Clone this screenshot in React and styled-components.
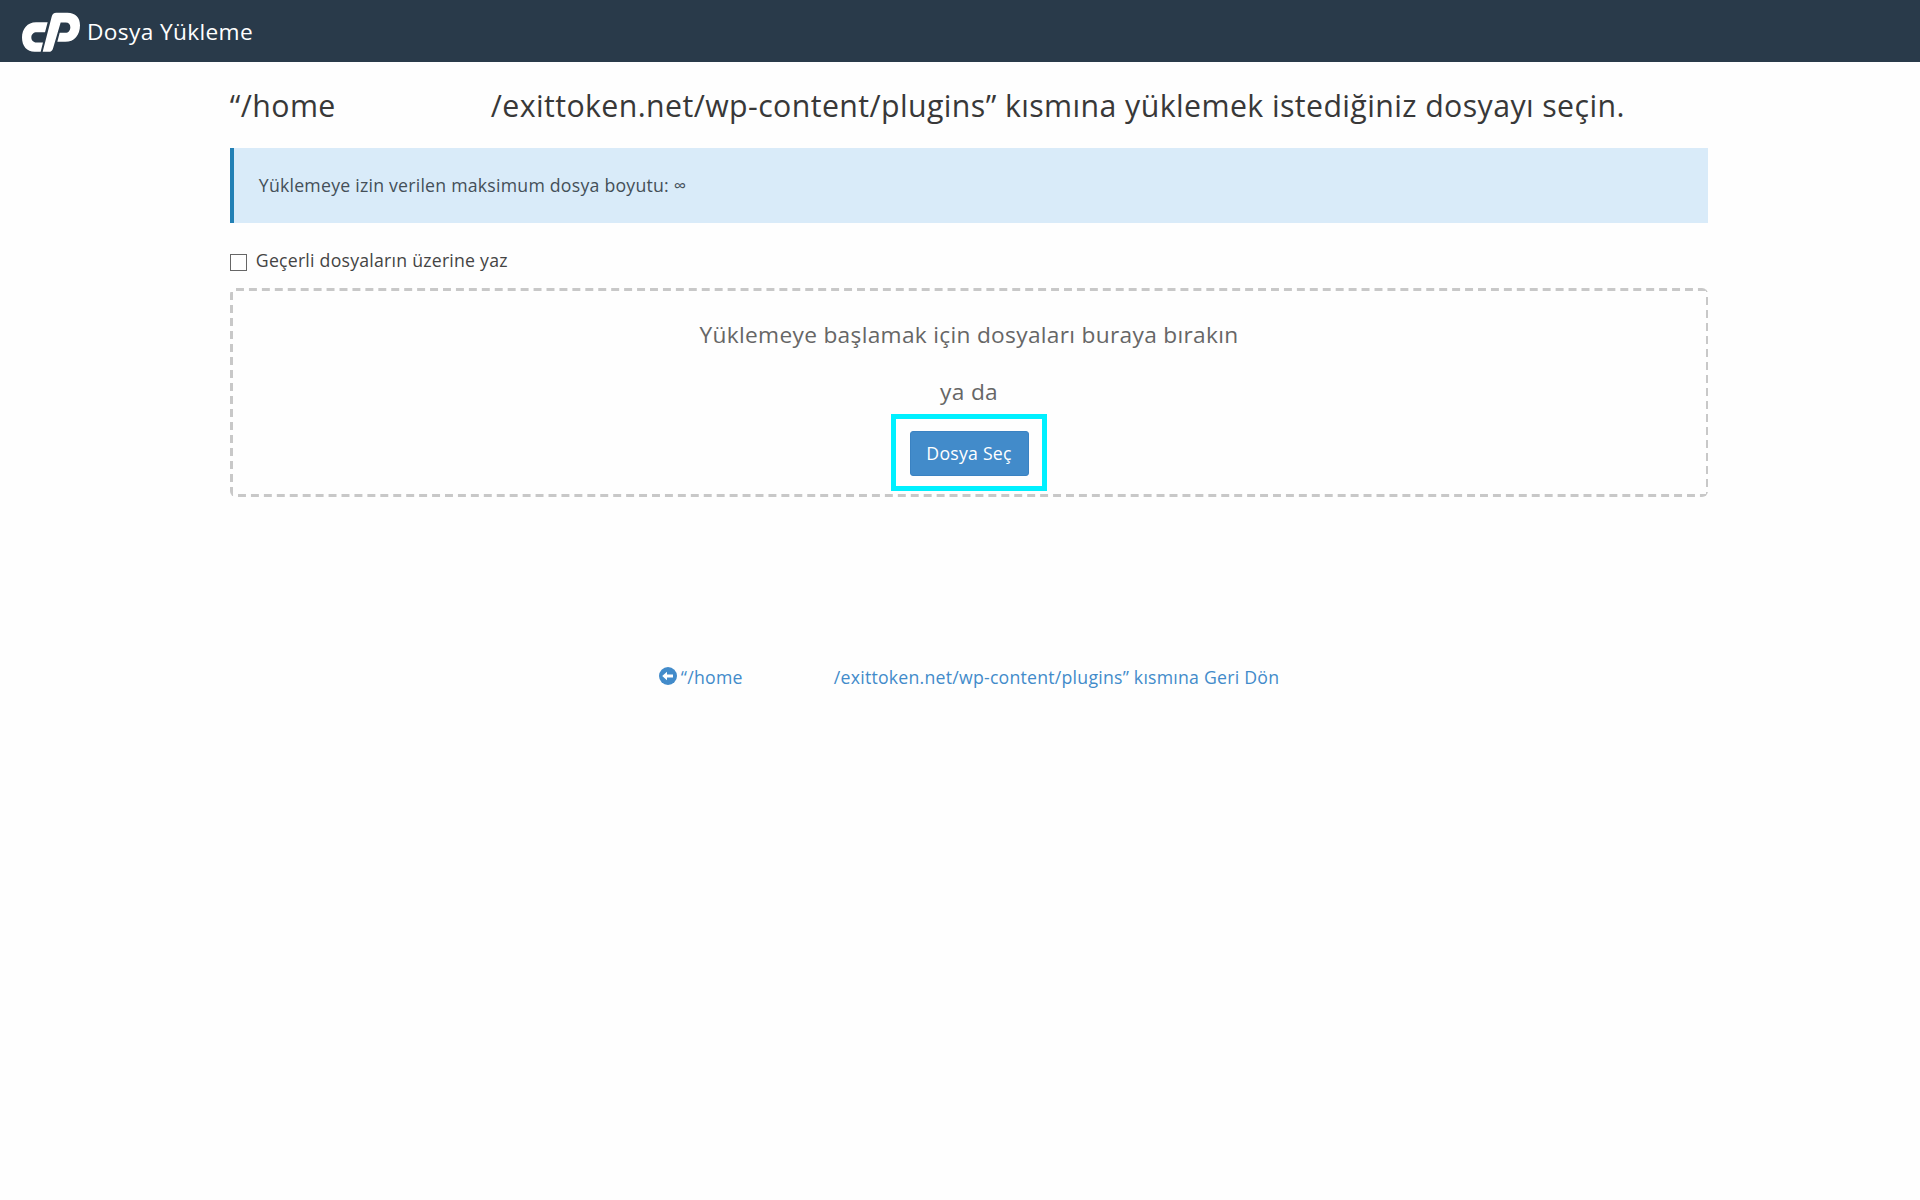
import React from "react";
import styled, { createGlobalStyle } from "styled-components";

const GlobalStyle = createGlobalStyle`
  body {
    margin: 0;
    background: #fefefe;
    color: #444;
    font-family: "Open Sans", "Noto Sans", sans-serif;
    font-size: 17.7px;
    line-height: 25px;
    letter-spacing: 0.23px;
  }
`;

const Header = styled.header`
  display: flex;
  align-items: center;
  height: 62px;
  padding: 0 22px;
  box-sizing: border-box;
  background: #293a4a;
  color: #fff;
`;

const Logo = styled.svg`
  width: 58px;
  height: 40px;
  margin-top: 2px;
  fill: #fff;
`;

const AppName = styled.span`
  margin: 2px 0 0 7px;
  font-size: 22.7px;
  line-height: 30px;
  letter-spacing: 0.35px;
  white-space: nowrap;
`;

const Page = styled.main`
  width: 1478.5px;
  margin-left: 229.8px;
`;

const Title = styled.h1`
  display: flex;
  margin: 0;
  padding: 23px 0 21px;
  color: #383838;
  font-size: 30.3px;
  font-weight: 400;
  line-height: 42px;
  letter-spacing: 0.4px;
  white-space: nowrap;
`;

const PathStart = styled.span`
  flex: none;
  width: ${props => props.$width}px;
`;

const Notice = styled.div`
  display: flex;
  align-items: center;
  height: 75px;
  padding-left: 25px;
  box-sizing: border-box;
  border-left: 4px solid #2280b5;
  background: #d9ebf9;
  color: #444f58;
`;

const Overwrite = styled.label`
  display: flex;
  align-items: center;
  width: max-content;
  margin-top: 25px;
`;

const Checkbox = styled.input`
  appearance: none;
  width: 17px;
  height: 17px;
  margin: 3px 9px 0 0;
  border: 1px solid #666;
  background: #fff;
`;

/* the dashes are longer than those of a dashed border */
const DropZone = styled.section`
  display: flex;
  flex-direction: column;
  align-items: center;
  height: 208.5px;
  margin-top: 15px;
  padding-top: 31px;
  box-sizing: border-box;
  border-radius: 6px;
  background-image: linear-gradient(90deg, #c8c8c8 8px, transparent 8px),
    linear-gradient(90deg, #c8c8c8 8px, transparent 8px),
    linear-gradient(#c8c8c8 8px, transparent 8px),
    linear-gradient(#c8c8c8 8px, transparent 8px);
  background-size: 12.94px 2.5px, 12.94px 2.5px, 2.5px 13px, 2.5px 13px;
  background-position: 6px 0, 8px 100%, 0 4px, 100% 9px;
  background-repeat: repeat-x, repeat-x, repeat-y, repeat-y;
  color: #666;
`;

const DropText = styled.p`
  margin: 0 0 ${props => props.$gap}px;
  font-size: 22.7px;
  line-height: 32px;
  letter-spacing: 0.31px;
`;

const Highlight = styled.div`
  display: flex;
  align-items: center;
  justify-content: center;
  width: 156px;
  height: 77px;
  padding-top: 2px;
  box-sizing: border-box;
  border: 5px solid #00f0ff;
`;

const SelectButton = styled.button`
  width: 119px;
  height: 45px;
  padding: 0;
  border: 1px solid #3a82c2;
  border-radius: 3px;
  background: #428bca;
  color: #fff;
  font: inherit;
  letter-spacing: inherit;
`;

const BackLink = styled.a`
  display: flex;
  align-items: center;
  width: max-content;
  margin: 168.5px auto 0;
  color: #428bca;
  white-space: nowrap;
`;

const BackIcon = styled.svg`
  width: 18px;
  height: 18px;
  margin: -4px 4px 0 0;
`;

const App = () => {
  return (
    <>
      <GlobalStyle />
      <Header>
        <Logo viewBox="0 0 174 119">
          <path d="M77 30H42C16 30 0 50 0 76C0 102 15 119 38 119H56L63 91H43C34 91 28 84 28 76C28 66 35 60 44 60H69Z" />
          <path d="M103 2H136C161 2 174 17 174 39C174 68 157 89 130 89H106L113 62H130C140 62 145 54 145 45C145 36 140 31 131 31H116L93 109C91 116 87 119 80 119H62L89 14C91 6 95 2 103 2Z" />
        </Logo>
        <AppName>Dosya Yükleme</AppName>
      </Header>
      <Page>
        <Title>
          <PathStart $width={261}>“/home</PathStart>
          <span>
            /exittoken.net/wp-content/plugins” kısmına yüklemek istediğiniz
            dosyayı seçin.
          </span>
        </Title>
        <Notice>Yüklemeye izin verilen maksimum dosya boyutu: ∞</Notice>
        <Overwrite>
          <Checkbox type="checkbox" />
          Geçerli dosyaların üzerine yaz
        </Overwrite>
        <DropZone>
          <DropText $gap={25}>
            Yüklemeye başlamak için dosyaları buraya bırakın
          </DropText>
          <DropText $gap={5.5}>ya da</DropText>
          <Highlight>
            <SelectButton type="button">Dosya Seç</SelectButton>
          </Highlight>
        </DropZone>
        <BackLink>
          <BackIcon viewBox="0 0 18 18">
            <circle cx="9" cy="9" r="9" fill="#428bca" />
            <path
              d="M3.2 9L8 4.7V7.6H14V10.4H8V13.3Z"
              fill="#fff"
            />
          </BackIcon>
          <PathStart $width={153}>“/home</PathStart>
          <span>/exittoken.net/wp-content/plugins” kısmına Geri Dön</span>
        </BackLink>
      </Page>
    </>
  );
};

export default App;
